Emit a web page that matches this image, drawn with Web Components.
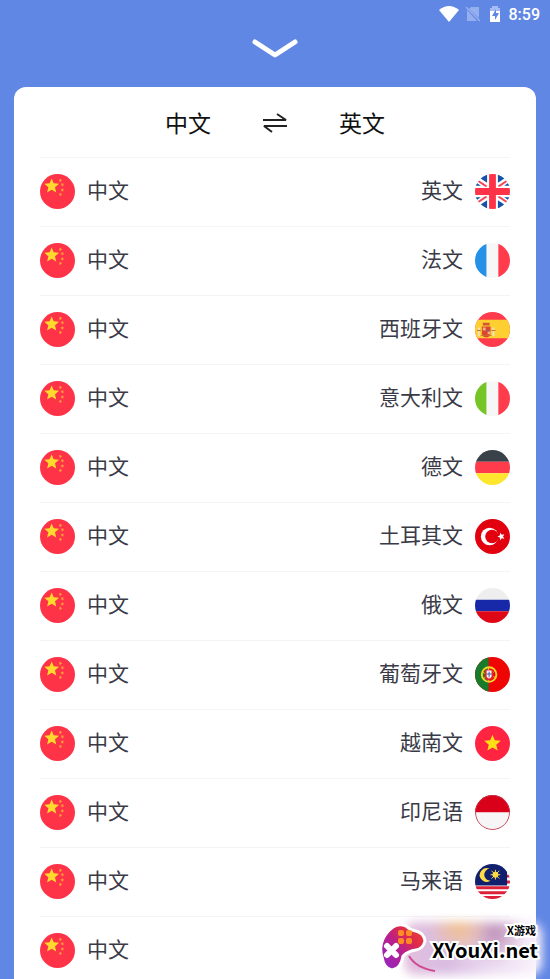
<!DOCTYPE html>
<html lang="zh-CN">
<head>
<meta charset="UTF-8">
<meta name="viewport" content="width=device-width, initial-scale=1">
<title>语言选择</title>
<style>
  body {margin: 0; font-family: Roboto, "Noto Sans CJK SC", sans-serif;}
</style>
</head>
<body>

<language-screen>
  <status-bar slot="status" time="8:59"></status-bar>
  <language-picker from="中文" to="英文"></language-picker>
  <site-badge slot="badge" name="X游戏" site="XYouXi.net"></site-badge>
</language-screen>

<script>
/* ===========================================================
   flags, all drawn in a 36 x 36 box and clipped to a circle
   ===========================================================*/
const star = (cx, cy, r, rot = 0, fill = '#ffda2c') => {
  const pts = [];
  for (let i = 0; i < 10; i++) {
    const a = (rot - 90 + i * 36) * Math.PI / 180;
    const d = i % 2 ? r * .45 : r;
    pts.push((cx + d * Math.cos(a)).toFixed(2) + ',' + (cy + d * Math.sin(a)).toFixed(2));
  }
  return `<polygon points="${pts.join(' ')}" fill="${fill}"/>`;
};
const across = (a, b, c) => `<path fill="${a}" d="M0 0h36v12H0z"/><path fill="${b}" d="M0 12h36v12H0z"/><path fill="${c}" d="M0 24h36v12H0z"/>`;
const down = (a, b, c) => `<path fill="${a}" d="M0 0h12v36H0z"/><path fill="${b}" d="M12 0h12v36H12z"/><path fill="${c}" d="M24 0h12v36H24z"/>`;

const FLAGS = {
  cn: `<path fill="#ff3347" d="M0 0h36v36H0z"/>${star(12, 12.5, 8)}
    ${star(21, 6.5, 2, 20, '#ffa03a')}${star(23, 11, 2, 40, '#ffa03a')}${star(23, 16.5, 2, 0, '#ffa03a')}${star(21, 21, 2, 20, '#ffa03a')}`,
  gb: `<path fill="#fff" d="M0 0h36v36H0z"/>
    <path fill="#1552a8" d="M12.500 0v9L5 4zM23.500 0v9L31 4zM12.500 36v-9L5 32zM23.500 36v-9L31 32zM0 8l6 4H0zM36 8l-6 4h6zM0 28l6-4H0zM36 28l-6-4h6z"/>
    <path stroke="#f4465b" stroke-width="2" d="M3 7l9 6M33 7l-9 6M3 29l9-6M33 29l-9-6"/>
    <path fill="#fff" d="M13 0h10v36H13zM0 13h36v10H0z"/>
    <path fill="#ff3347" d="M14.500 0h7v36h-7zM0 14.500h36v7H0z"/>`,
  fr: down('#2490e6', '#f7f7f7', '#ff3b4c'),
  es: `<path fill="#ff3b4c" d="M0 0h36v36H0z"/><path fill="#ffcf32" d="M0 8h36v19H0z"/>
    <path fill="#d3572f" d="M8 11h7v3H8z"/><path fill="#eee1bd" d="M3 16h2v9H3zM18 16h2v9h-2z"/>
    <path fill="#db452d" d="M7 15h9v7q-1 4-4.500 4T7 22z"/>
    <path fill="#f1b17c" d="M8 16h3v3H8zM13 20h3v3h-3z"/><path fill="#8a61a0" d="M12 18h2v2h-2z"/>
    <path stroke="#c76b35" d="M2 19h4M17 19h4M6 24h11"/>`,
  it: down('#74c525', '#f7f7f7', '#ff3b4c'),
  de: across('#394149', '#ff3b4c', '#ffe62e'),
  tr: `<path fill="#e2000f" d="M0 0h36v36H0z"/><circle cx="15" cy="18" r="9" fill="#fff"/><circle cx="17.500" cy="18" r="7" fill="#e2000f"/>${star(27, 18, 4, -18, '#fff')}`,
  ru: across('#eee', '#1729a8', '#df0715'),
  pt: `<path fill="#f00505" d="M0 0h36v36H0z"/><path fill="#187b2b" d="M0 0h14v36H0z"/>
    <circle cx="14.500" cy="18" r="7.500" fill="none" stroke="#f4d626" stroke-width="2"/>
    <path stroke="#f4d626" d="M8 16l13 5M9 22l11-7M14 11v14" fill="none"/>
    <path fill="#e9202a" d="M10 13h9v7q-1 4-4.500 4T10 20z"/><path fill="#fff" d="M12 14h5v6q-1 2-2.500 2T12 20z"/>
    <path stroke="#354e9c" d="M14.500 15v6M12 17.500h5"/>`,
  vn: `<path fill="#ff2442" d="M0 0h36v36H0z"/>${star(18, 18, 9, 0, '#ffde16')}`,
  id: `<path fill="#d90019" d="M0 0h36v18H0z"/><path fill="#f8f5f7" d="M0 18h36v18H0z"/><circle cx="18" cy="18" r="17.500" fill="none" stroke="#c1344a"/>`,
  my: `<path fill="#fff" d="M0 0h36v36H0z"/>
    <path fill="#dc2038" d="M30 11h6v3h-6zM30 17h6v3h-6zM0 23h36v3H0zM0 28h36v3H0zM0 33h36v3H0z"/>
    <path fill="#10206f" d="M0 0h33v22H0z"/>
    <path fill="#ffdc45" d="M15 5A7 7 0 1 0 16 17A6 6 0 0 1 15 5z"/>
    <circle cx="21" cy="11" r="3" fill="#ffdc45"/>
    <path stroke="#ffdc45" stroke-width="1" d="M21 6v10M16 11h10M17 7l8 8M25 7l-8 8"/>`
};

const LANGUAGES = [
  ['英文', 'gb'], ['法文', 'fr'], ['西班牙文', 'es'], ['意大利文', 'it'],
  ['德文', 'de'], ['土耳其文', 'tr'], ['俄文', 'ru'], ['葡萄牙文', 'pt'],
  ['越南文', 'vn'], ['印尼语', 'id'], ['马来语', 'my'], ['', '']
];

/* ===========================================================
   <flag-icon>
   ===========================================================*/
class FlagIcon extends HTMLElement {
  constructor(){
    super();
    this.attachShadow({mode:'open'});
  }
  connectedCallback(){
    this.shadowRoot.innerHTML = `
      <style>
        :host{display:block;flex:none;width:35px;height:35px;border-radius:50%;overflow:hidden;}
        svg{display:block;width:100%;height:100%;}
      </style>
      <svg viewBox="0 0 36 36" aria-hidden="true">${FLAGS[this.getAttribute('code')] ?? ''}</svg>`;
  }
}
customElements.define('flag-icon', FlagIcon);

/* ===========================================================
   <status-bar>
   ===========================================================*/
class StatusBar extends HTMLElement {
  constructor(){
    super();
    this.attachShadow({mode:'open'});
  }
  connectedCallback(){
    this.shadowRoot.innerHTML = `
      <style>
        :host{display:flex;justify-content:flex-end;align-items:center;gap:8px;
              height:28px;padding:0 10px;color:#fff;font-size:16px;font-weight:500;}
        svg{display:block;}
        .wifi{margin-right:-2px;}
      </style>
      <svg class="wifi" width="20" height="16" viewBox="0 0 20 16"><path fill="#fff" d="M0 4Q10-4 20 4L10 16z"/></svg>
      <svg width="16" height="16" viewBox="0 0 16 16">
        <path fill="#95afef" d="M6 1h8v11L4 3zM2 4l10 11H2z"/><path stroke="#95afef" stroke-width="1.500" d="M1 1l14 14"/>
      </svg>
      <svg width="12" height="16" viewBox="0 0 12 16">
        <path fill="#a6bcf2" d="M3 0h6v2h2v4H1V2h2z"/><path fill="#fff" d="M1 5h10v11H1z"/>
        <path fill="#6187e5" d="M7 3L3 10h3v4l4-7H7z"/>
      </svg>
      <span>${this.getAttribute('time')}</span>`;
  }
}
customElements.define('status-bar', StatusBar);

/* ===========================================================
   <language-row>
   ===========================================================*/
class LanguageRow extends HTMLElement {
  constructor(){
    super();
    this.attachShadow({mode:'open'});
  }
  connectedCallback(){
    const to   = this.getAttribute('to');
    const code = this.getAttribute('code');
    this.shadowRoot.innerHTML = `
      <style>
        :host{display:block;border-top:1px solid #f4f4f6;}
        button{display:flex;align-items:center;gap:12px;width:100%;height:68px;
               padding:0 0 2px;border:0;background:none;color:#3a3a47;cursor:pointer;
               font:inherit;font-size:21px;line-height:32px;text-align:left;}
        .to{margin-left:auto;}
      </style>
      <button type="button">
        <flag-icon code="cn"></flag-icon>
        <span>中文</span>
        ${to ? `<span class="to">${to}</span><flag-icon code="${code}"></flag-icon>` : ''}
      </button>`;
  }
}
customElements.define('language-row', LanguageRow);

/* ===========================================================
   <language-picker>
   ===========================================================*/
class LanguagePicker extends HTMLElement {
  constructor(){
    super();
    this.attachShadow({mode:'open'});
  }
  connectedCallback(){
    this.from = this.getAttribute('from');
    this.to   = this.getAttribute('to');
    this.render();
  }
  swap(){
    [this.from, this.to] = [this.to, this.from];
    this.render();
  }
  render(){
    this.shadowRoot.innerHTML = `
      <style>
        :host{display:flex;flex-direction:column;min-height:0;padding:0 26px;
              background:#fff;border-radius:12px 12px 0 0;}
        header{display:flex;justify-content:center;align-items:center;gap:48px;
               flex:none;height:70px;padding-top:6px;box-sizing:border-box;}
        button{padding:0;border:0;background:none;color:#111;cursor:pointer;
               font:inherit;font-size:23px;line-height:32px;}
        svg{display:block;}
        .list{overflow-y:auto;min-height:0;scrollbar-width:none;}
      </style>
      <header>
        <button type="button">${this.from}</button>
        <button type="button" id="swap" aria-label="交换">
          <svg width="32" height="24" viewBox="0 0 32 24" fill="none" stroke="#222" stroke-width="2" stroke-linejoin="bevel">
            <path d="M4 7h23l-9-6M28 13H5l8 6"/>
          </svg>
        </button>
        <button type="button">${this.to}</button>
      </header>
      <div class="list">
        ${LANGUAGES.map(([name, code]) => `<language-row to="${name}" code="${code}"></language-row>`).join('')}
      </div>`;
    this.shadowRoot.getElementById('swap').onclick = () => this.swap();
  }
}
customElements.define('language-picker', LanguagePicker);

/* ===========================================================
   <site-badge>
   ===========================================================*/
class SiteBadge extends HTMLElement {
  constructor(){
    super();
    this.attachShadow({mode:'open'});
  }
  connectedCallback(){
    this.shadowRoot.innerHTML = `
      <style>
        :host{display:flex;position:relative;isolation:isolate;width:162px;height:61px;
              color:#000;font-family:"Noto Sans CJK SC",sans-serif;font-weight:700;}
        .glow{position:absolute;inset:4px 0 4px 24px;z-index:-1;filter:blur(5px);border-radius:12px;
              background:
                radial-gradient(circle at 40% 8%, #f3c08c, transparent 32%),
                radial-gradient(circle at 66% 22%, #bd8fb8, transparent 30%),
                linear-gradient(100deg,#e3bfdd,#d9bde2 35%,#eddcf2 65%,#fbf5fc);}
        svg{flex:none;display:block;}
        .text{display:flex;flex-direction:column;align-items:flex-end;flex:1;
              margin-left:-6px;padding:4px 4px 0 0;
              paint-order:stroke fill;-webkit-text-stroke:4px #fff;}
        .name{font-size:11px;line-height:16px;padding-right:2px;}
        .site{font-size:20px;line-height:24px;}
      </style>
      <div class="glow"></div>
      <svg width="56" height="61" viewBox="5 0 56 61">
        <defs><linearGradient id="pad" x1="0" y1="1" x2="1" y2="0">
          <stop offset="0" stop-color="#8d27c8"/><stop offset=".45" stop-color="#b91f8d"/><stop offset=".7" stop-color="#df2b48"/><stop offset="1" stop-color="#ed4d3a"/>
        </linearGradient></defs>
        <path d="M34 38Q41 50 60 53" fill="none" stroke="#cf4a91" stroke-width="2"/>
        <path fill="url(#pad)" stroke="#fff" stroke-width="3" stroke-linejoin="round"
          d="M18 9Q24 5 31 8Q35 12 41 13Q49 15 50 23Q48 31 41 32Q33 33 28 38Q26 51 17 52Q9 51 7 39Q4 29 8 21Q11 14 18 9z"/>
        <path stroke="#fff" stroke-width="6" stroke-linecap="round" d="M12 28l9 9M21 28l-9 9"/>
        <g fill="#ff8c24"><rect x="23" y="12" width="6" height="6" rx="2"/><rect x="31" y="12" width="6" height="6" rx="2"/><rect x="23" y="20" width="6" height="6" rx="2"/><rect x="31" y="20" width="6" height="6" rx="2"/></g>
      </svg>
      <div class="text">
        <span class="name">${this.getAttribute('name')}</span>
        <span class="site">${this.getAttribute('site')}</span>
      </div>`;
  }
}
customElements.define('site-badge', SiteBadge);

/* ===========================================================
   <language-screen>
   - slot "status" en haut, "badge" par-dessus la liste
   ===========================================================*/
class LanguageScreen extends HTMLElement {
  constructor(){
    super();
    this.attachShadow({mode:'open'});
  }
  connectedCallback(){
    this.shadowRoot.innerHTML = `
      <style>
        :host{display:flex;flex-direction:column;position:relative;height:100vh;
              overflow:hidden;background:#6187e5;}
        .close{align-self:center;flex:none;height:59px;padding:0 0 20px;border:0;
               background:none;cursor:pointer;}
        .close svg{display:block;}
        main{display:flex;flex-direction:column;flex:1;min-height:0;padding:0 14px;}
        .badge{position:absolute;right:8px;bottom:0;}
      </style>
      <slot name="status"></slot>
      <button class="close" type="button" aria-label="关闭">
        <svg width="48" height="24" viewBox="0 0 48 24" fill="none" stroke="#fff" stroke-width="5" stroke-linecap="round" stroke-linejoin="round">
          <path d="M4 6l20 13L44 6"/>
        </svg>
      </button>
      <main><slot></slot></main>
      <div class="badge"><slot name="badge"></slot></div>`;
  }
}
customElements.define('language-screen', LanguageScreen);
</script>
</body>
</html>
